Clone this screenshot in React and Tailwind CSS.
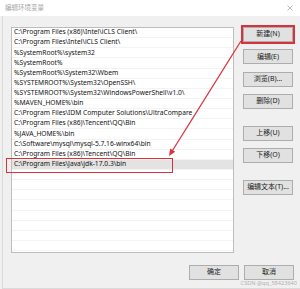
import React from 'react';

const paths = [
  'C:\\Program Files (x86)\\Intel\\iCLS Client\\',
  'C:\\Program Files\\Intel\\iCLS Client\\',
  '%SystemRoot%\\system32',
  '%SystemRoot%',
  '%SystemRoot%\\System32\\Wbem',
  '%SYSTEMROOT%\\System32\\OpenSSH\\',
  '%SYSTEMROOT%\\System32\\WindowsPowerShell\\v1.0\\',
  '%MAVEN_HOME%\\bin',
  'C:\\Program Files\\IDM Computer Solutions\\UltraCompare',
  'C:\\Program Files (x86)\\Tencent\\QQ\\Bin',
  '%JAVA_HOME%\\bin',
  'C:\\Software\\mysql\\mysql-5.7.16-winx64\\bin',
  'C:\\Program Files (x86)\\Tencent\\QQ\\Bin',
  'C:\\Program Files\\Java\\jdk-17.0.3\\bin',
];

const SELECTED = 13;

const Btn = ({ children, className = '' }) => (
  <div className={`h-[15px] w-[50px] flex items-center justify-center bg-[#e1e1e1] border border-[#adadad] text-[7px] text-[#222] ${className}`}>
    {children}
  </div>
);

export default function App() {
  const rows = [...paths, ...Array(8).fill('')];

  return (
    <div className="relative w-[300px] h-[289px] overflow-hidden bg-[#f0f0f0] flex flex-col" style={{ fontFamily: '"Noto Sans", "Noto Sans CJK SC", sans-serif' }}>
      {/* title bar */}
      <div className="h-[16px] bg-white flex items-center justify-between pl-[5px] pr-[7px] shrink-0">
        <span className="text-[6.5px] text-[#a3a3a3] leading-none">编辑环境变量</span>
        <svg width="6" height="6" viewBox="0 0 6 6" className="text-[#9a9a9a]">
          <path d="M0.5 0.5 L5.5 5.5 M5.5 0.5 L0.5 5.5" stroke="currentColor" strokeWidth="0.7" />
        </svg>
      </div>

      <div className="flex-1 flex flex-col border-l border-[#dadada] ml-[2px] border-b">
        <div className="flex pl-[8px] pt-[11px] gap-[9px]">
          {/* path list */}
          <div className="w-[223px] h-[226px] bg-white border border-[#bdbdbd] overflow-hidden">
            {rows.map((p, i) => (
              <div
                key={i}
                className={`relative h-[10.15px] flex items-center pl-[2px] border-b border-[#f3f3f3] text-[6.7px] leading-none text-[#111] whitespace-nowrap ${i === SELECTED ? 'bg-[#e3e3e3]' : ''}`}
              >
                {p}
              </div>
            ))}
          </div>

          {/* buttons */}
          <div className="flex flex-col">
            <Btn className="outline-2 outline-[#d8323c]">新建(N)</Btn>
            <Btn className="mt-[7.3px]">编辑(E)</Btn>
            <Btn className="mt-[7.3px]">浏览(B)...</Btn>
            <Btn className="mt-[7.3px]">删除(D)</Btn>
            <Btn className="mt-[17px]">上移(U)</Btn>
            <Btn className="mt-[7.3px]">下移(O)</Btn>
            <Btn className="mt-[17px]">编辑文本(T)...</Btn>
          </div>
        </div>

        <div className="flex justify-end gap-[5px] pr-[6px] mt-[12px]">
          <Btn>确定</Btn>
          <Btn>取消</Btn>
        </div>
      </div>

      {/* selection highlight box */}
      <div className="absolute left-[6px] top-[158px] w-[167px] h-[15px] border-[1.5px] border-[#d8323c]" />

      {/* arrow */}
      <svg className="absolute inset-0" width="300" height="289" viewBox="0 0 300 289">
        <line x1="241" y1="41" x2="172.5" y2="150.5" stroke="#d8323c" strokeWidth="1.3" />
        <polygon points="169,156 175.2,151.7 170.2,148.5" fill="#d8323c" />
      </svg>

      {/* watermark */}
      <div className="absolute right-[3px] bottom-[2px] text-[5.6px] leading-none text-[#b0b0b0]">CSDN @qq_58423640</div>
    </div>
  );
}
